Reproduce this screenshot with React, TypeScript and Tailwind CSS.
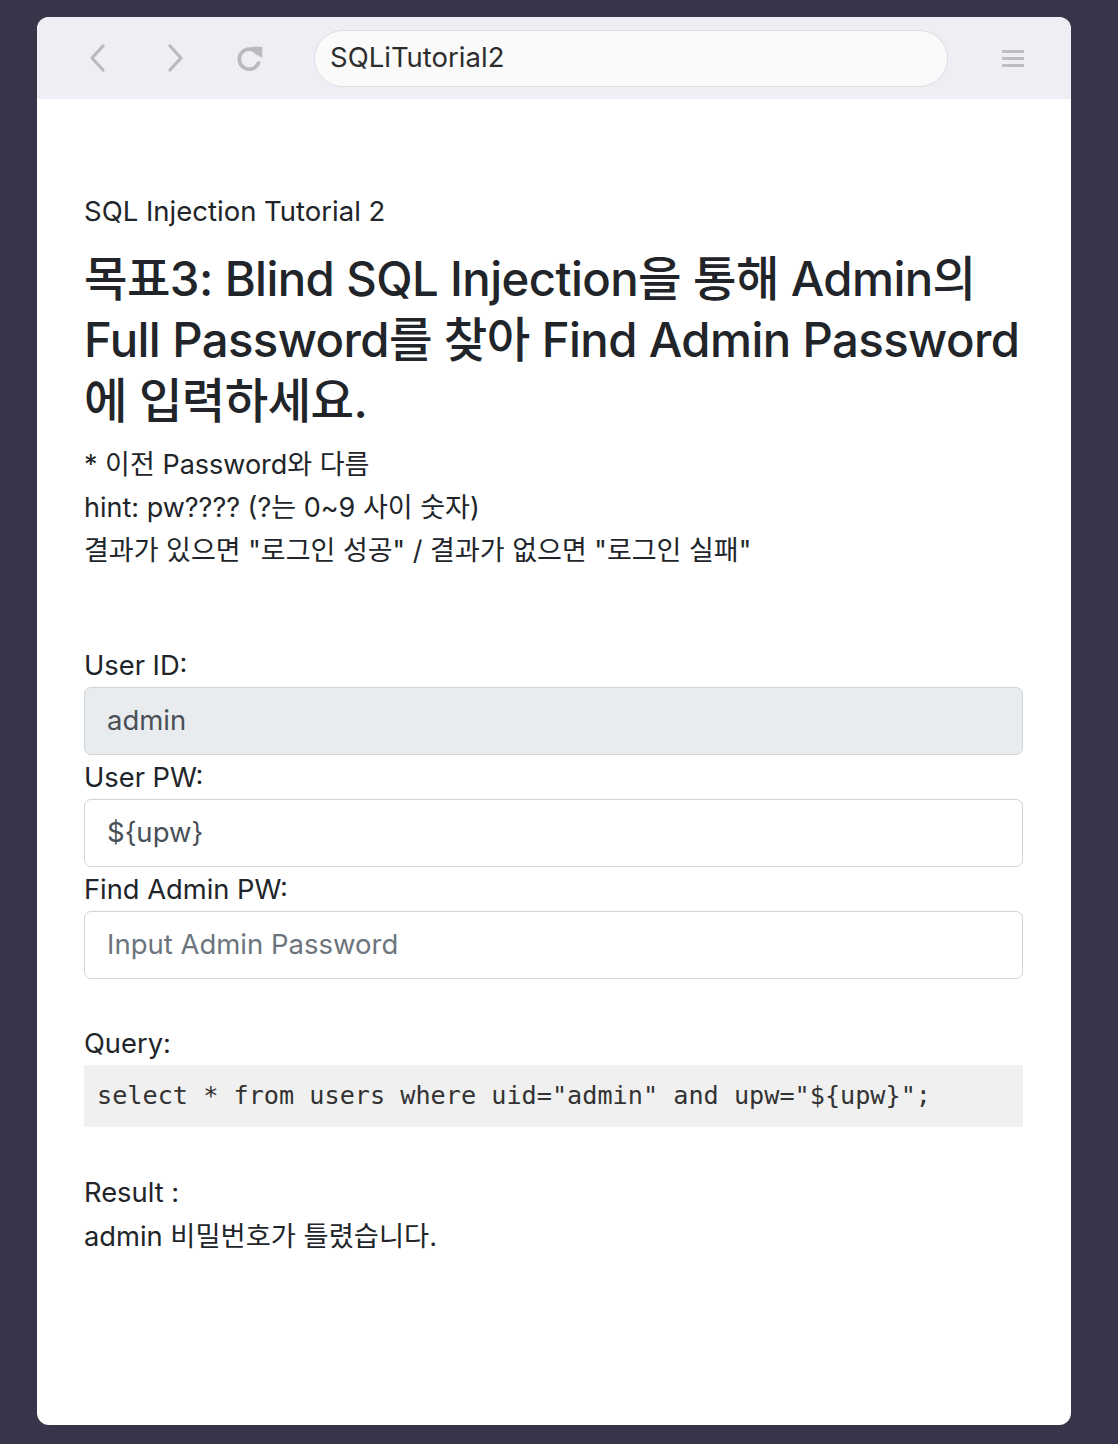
import React from "react";

const sans = { fontFamily: 'Inter, "Noto Sans CJK KR", sans-serif' };

export default function App() {
  return (
    <div className="min-h-[1444px] w-full bg-[#37354a] pt-[17px] pl-[37px] pr-[47px] pb-[19px]" style={sans}>
      <div className="flex h-[1408px] w-[1034px] flex-col overflow-hidden rounded-[12px] bg-white">
        {/* top bar */}
        <div className="flex h-[82px] shrink-0 items-center bg-[#efeef4]">
          <div className="ml-[52px] flex w-[16px] justify-center">
            <svg width="16" height="28" viewBox="0 0 16 28" fill="none">
              <path d="M14 2 L3 14 L14 26" stroke="#b9b9be" strokeWidth="3.2" strokeLinecap="round" strokeLinejoin="round" />
            </svg>
          </div>
          <div className="ml-[63px] flex w-[16px] justify-center">
            <svg width="16" height="28" viewBox="0 0 16 28" fill="none">
              <path d="M2 2 L13 14 L2 26" stroke="#b9b9be" strokeWidth="3.2" strokeLinecap="round" strokeLinejoin="round" />
            </svg>
          </div>
          <div className="ml-[52px] flex w-[28px] justify-center">
            <svg width="28" height="28" viewBox="0 0 28 28" fill="none">
              <path d="M21.5 9.5 A10 10 0 1 0 22.5 19" stroke="#b9b9be" strokeWidth="3.6" strokeLinecap="round" fill="none" />
              <path d="M16 3.5 L25.5 3.5 L25.5 13 Z" fill="#b9b9be" stroke="#b9b9be" strokeWidth="1.5" strokeLinejoin="round" />
            </svg>
          </div>
          <div className="ml-[50px] flex h-[57px] w-[634px] items-center rounded-full border border-[#dddde2] bg-[#fafafa] pl-[15px] text-[27.5px] text-[#2d2d2d]">
            SQLiTutorial2
          </div>
          <div className="ml-[54px] flex flex-col gap-[4px]">
            <div className="h-[3px] w-[22px] bg-[#bdbdc2]" />
            <div className="h-[3px] w-[22px] bg-[#bdbdc2]" />
            <div className="h-[3px] w-[22px] bg-[#bdbdc2]" />
          </div>
        </div>

        {/* content */}
        <div className="flex flex-col pl-[47px] pr-[48px] pt-[91px] text-[#212529]">
          <div className="h-[42px] text-[27.5px] leading-[42px]">SQL Injection Tutorial 2</div>
          <h1 className="mt-[16px] whitespace-nowrap text-[47.3px] font-medium leading-[61px] tracking-[-0.6px]">
            목표3: Blind SQL Injection을 통해 Admin의
            <br />
            Full Password를 찾아 Find Admin Password
            <br />
            에 입력하세요.
          </h1>
          <div className="mt-[12px] text-[27px] leading-[43px]">
            <div>* 이전 Password와 다름</div>
            <div>hint: pw???? (?는 0~9 사이 숫자)</div>
            <div>결과가 있으면 "로그인 성공" / 결과가 없으면 "로그인 실패"</div>
          </div>

          <div className="mt-[73px] h-[42px] text-[27.3px] leading-[42px]">User ID:</div>
          <div className="flex h-[68px] items-center rounded-[7px] border border-[#ced4da] bg-[#e9ecef] pl-[22px] text-[27.5px] text-[#495057]">
            admin
          </div>
          <div className="mt-[2px] h-[42px] text-[27.3px] leading-[42px]">User PW:</div>
          <div className="flex h-[68px] items-center rounded-[7px] border border-[#ced4da] bg-white pl-[22px] text-[27.5px] text-[#495057]">
            {"${upw}"}
          </div>
          <div className="mt-[2px] h-[42px] text-[27.3px] leading-[42px]">Find Admin PW:</div>
          <div className="flex h-[68px] items-center rounded-[7px] border border-[#ced4da] bg-white pl-[22px] text-[27.5px] text-[#6c757d]">
            Input Admin Password
          </div>

          <div className="mt-[44px] h-[42px] text-[27.3px] leading-[42px]">Query:</div>
          <div
            className="flex h-[62px] items-center bg-[#f0f0f0] pl-[13px] text-[25.2px] text-[#333]"
            style={{ fontFamily: '"DejaVu Sans Mono", monospace' }}
          >
            {'select * from users where uid="admin" and upw="${upw}";'}
          </div>

          <div className="mt-[45px] h-[42px] text-[27.3px] leading-[42px]">Result :</div>
          <div className="mt-[2px] h-[42px] text-[27.3px] leading-[42px]">admin 비밀번호가 틀렸습니다.</div>
        </div>
      </div>
    </div>
  );
}
